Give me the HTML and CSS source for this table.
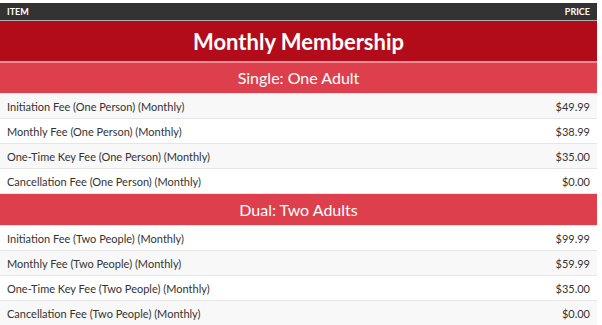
FILE: index.html
```html
<!DOCTYPE html>
<html>
<head>
<meta charset="utf-8">
<link rel="stylesheet" href="styles.css">
</head>
<body>
<table class="prices">
  <thead>
    <tr class="head"><th class="c-item">Item</th><th class="c-price">Price</th></tr>
  </thead>
  <tbody>
    <tr class="title"><td colspan="2">Monthly Membership</td></tr>
    <tr class="group"><td colspan="2">Single: One Adult</td></tr>
    <tr class="row alt"><td>Initiation Fee (One Person) (Monthly)</td><td class="amt">$49.99</td></tr>
    <tr class="row"><td>Monthly Fee (One Person) (Monthly)</td><td class="amt">$38.99</td></tr>
    <tr class="row alt"><td>One-Time Key Fee (One Person) (Monthly)</td><td class="amt">$35.00</td></tr>
    <tr class="row"><td>Cancellation Fee (One Person) (Monthly)</td><td class="amt">$0.00</td></tr>
    <tr class="group group-next"><td colspan="2">Dual: Two Adults</td></tr>
    <tr class="row"><td>Initiation Fee (Two People) (Monthly)</td><td class="amt">$99.99</td></tr>
    <tr class="row alt"><td>Monthly Fee (Two People) (Monthly)</td><td class="amt">$59.99</td></tr>
    <tr class="row"><td>One-Time Key Fee (Two People) (Monthly)</td><td class="amt">$35.00</td></tr>
    <tr class="row alt"><td>Cancellation Fee (Two People) (Monthly)</td><td class="amt">$0.00</td></tr>
  </tbody>
</table>
</body>
</html>
```
FILE: styles.css
```css
html, body {
  margin: 0;
  padding: 0;
  background: #fff;
}
body {
  padding-top: 3px;
  font-family: Lato, "Open Sans", sans-serif;
  color: #333;
}
.prices {
  width: 597px;
  border-collapse: collapse;
  table-layout: auto;
}
.prices th, .prices td {
  padding: 0;
}
.head th {
  background: #333;
  color: #fff;
  font-size: 9px;
  font-weight: 700;
  text-transform: uppercase;
  height: 17px;
  padding: 0 7px;
  border-bottom: 1px solid #b1b1b1;
}
.c-item { text-align: left; }
.c-price { text-align: right; }
.title td {
  background: #b20c1a;
  color: #fff;
  font-size: 22px;
  font-weight: 700;
  text-align: center;
  height: 40px;
  border-bottom: 2px solid #e98b93;
}
.group td {
  background: #dd3f4c;
  color: #fff;
  font-size: 16px;
  text-align: center;
  height: 28px;
  padding-bottom: 2px;
  border-bottom: 1px solid #e9e9e9;
}
.group-next td {
  height: 31px;
  padding-bottom: 0;
}
.row td {
  background: #fff;
  font-size: 11px;
  height: 24px;
  padding: 0 7px;
  border-bottom: 1px solid #e6e6e6;
}
.row.alt td {
  background: #f8f8f8;
}
.row td.amt {
  text-align: right;
}
```
